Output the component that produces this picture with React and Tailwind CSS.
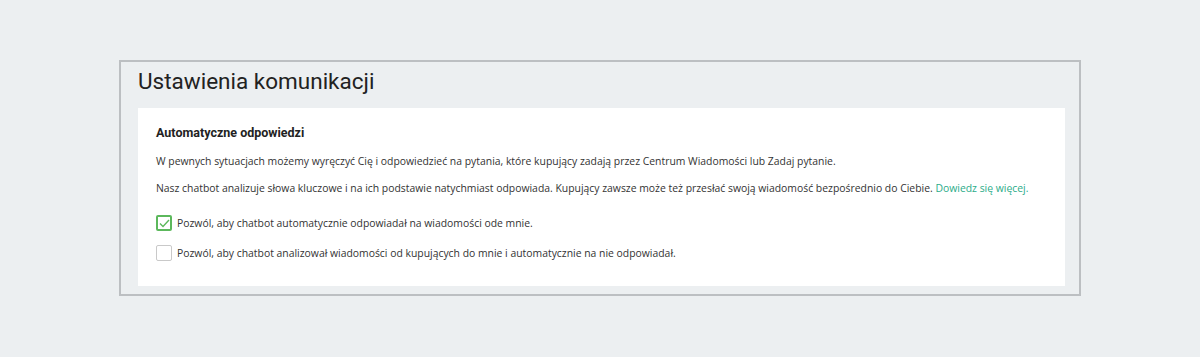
import React, { useState } from "react";

export default function App() {
  const [autoReply, setAutoReply] = useState(true);
  const [analyze, setAnalyze] = useState(false);

  return (
    <div className="min-h-[357px] bg-[#eceff1] pt-[60px] px-[119px] font-['Open_Sans',sans-serif]">
      <div className="border-2 border-[#bcbfc2] pl-[17px] pr-[14px] pb-[8px]">
        <h1 className="font-['Roboto',sans-serif] text-[22.5px] leading-[28px] text-[#222] pt-[5px] pb-[13px]">
          Ustawienia komunikacji
        </h1>

        {/* Settings card */}
        <div className="bg-white px-[18px] pt-[16px] pb-[25px]">
          <h2 className="font-['Roboto',sans-serif] font-bold text-[12.5px] leading-[18px] text-[#222]">
            Automatyczne odpowiedzi
          </h2>
          <p className="mt-[11px] text-[10.4px] leading-[16px] text-[#333]">
            W pewnych sytuacjach możemy wyręczyć Cię i odpowiedzieć na pytania, które kupujący zadają przez Centrum Wiadomości lub Zadaj pytanie.
          </p>
          <p className="mt-[11px] text-[10.4px] leading-[16px] text-[#333]">
            Nasz chatbot analizuje słowa kluczowe i na ich podstawie natychmiast odpowiada. Kupujący zawsze może też przesłać swoją wiadomość bezpośrednio do Ciebie.{" "}
            <a href="#" className="text-[#2bac89]">Dowiedz się więcej.</a>
          </p>

          <div className="mt-[19px] flex flex-col gap-[14px]">
            <Checkbox
              checked={autoReply}
              onChange={() => setAutoReply(!autoReply)}
              label="Pozwól, aby chatbot automatycznie odpowiadał na wiadomości ode mnie."
            />
            <Checkbox
              checked={analyze}
              onChange={() => setAnalyze(!analyze)}
              label="Pozwól, aby chatbot analizował wiadomości od kupujących do mnie i automatycznie na nie odpowiadał."
            />
          </div>
        </div>
      </div>
    </div>
  );
}

function Checkbox({ checked, onChange, label }) {
  return (
    <label className="flex items-center gap-[5px] cursor-pointer select-none">
      <span
        onClick={onChange}
        className={
          checked
            ? "w-[16px] h-[16px] rounded-[2px] border-2 border-[#5cb85c] bg-white flex items-center justify-center"
            : "w-[16px] h-[16px] rounded-[2px] border border-[#c9c9c9] bg-white flex items-center justify-center"
        }
      >
        {checked && (
          <svg width="11" height="9" viewBox="0 0 11 9" fill="none">
            <path d="M1 4.5L4 7.5L10 1" stroke="#5cb85c" strokeWidth="1.4" />
          </svg>
        )}
      </span>
      <span className="text-[10.4px] leading-[16px] text-[#333]">{label}</span>
    </label>
  );
}
